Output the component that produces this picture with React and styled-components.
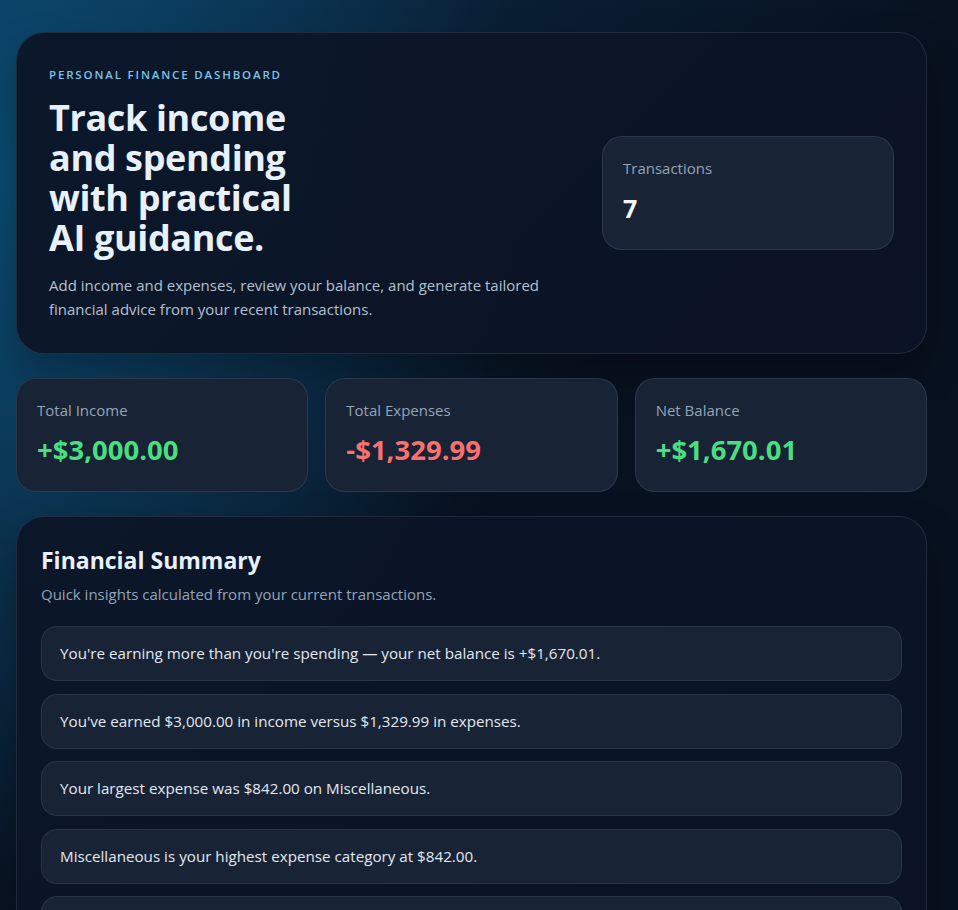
import React from "react";
import styled, { createGlobalStyle } from "styled-components";

const Global = createGlobalStyle`
  html, body { margin: 0; padding: 0; }
  body {
    font-family: "Segoe UI", "Open Sans", "Noto Sans", sans-serif;
    color: #e2e8f0;
    background-color: #08111f;
    background-image:
      radial-gradient(ellipse 520px 700px at 0px 180px, rgba(12, 86, 128, 0.75), rgba(12, 86, 128, 0) 100%),
      linear-gradient(135deg, #0b2d4a 0px, #08111f 700px);
    background-repeat: no-repeat;
  }
  * { box-sizing: border-box; }
`;

const Page = styled.main`
  padding: 32px 31px 48px 16px;
  display: flex;
  flex-direction: column;
  gap: 24px;
`;

const Panel = styled.section`
  border-radius: 28px;
  border: 1px solid rgba(148, 163, 184, 0.16);
  background: linear-gradient(135deg, rgba(12, 22, 40, 0.96), rgba(11, 20, 36, 0.96));
  box-shadow: 0 20px 40px rgba(0, 0, 0, 0.25);
  padding: ${(p) => p.$pad || "24px"};
`;

const Hero = styled(Panel)`
  display: flex;
  align-items: center;
  justify-content: space-between;
  gap: 32px;
`;

const HeroText = styled.div`
  display: flex;
  flex-direction: column;
`;

const Eyebrow = styled.p`
  margin: 2px 0 0;
  font-size: 11.5px;
  letter-spacing: 0.16em;
  text-transform: uppercase;
  color: #7cc4ea;
  font-weight: 600;
`;

const Title = styled.h1`
  margin: 16px 0 0;
  font-size: 36px;
  line-height: 40px;
  font-weight: 700;
  color: #e8f0fa;
  max-width: 270px;
  letter-spacing: -0.01em;
`;

const Lead = styled.p`
  margin: 15px 0 0;
  font-size: 15px;
  line-height: 24px;
  color: #b4c0d0;
  max-width: 520px;
`;

const StatCard = styled.div`
  border-radius: 20px;
  border: 1px solid rgba(148, 163, 184, 0.16);
  background: #182335;
  padding: 21px 20px;
  height: 114px;
  width: ${(p) => p.$width || "auto"};
  flex-shrink: 0;
  display: flex;
  flex-direction: column;
  gap: 14px;
`;

const StatLabel = styled.span`
  font-size: 15px;
  color: #94a3b8;
`;

const StatValue = styled.span`
  font-size: ${(p) => (p.$small ? "25px" : "27.5px")};
  font-weight: 700;
  line-height: 32px;
  color: ${(p) => (p.$tone === "pos" ? "#4ade80" : p.$tone === "neg" ? "#f87171" : "#f1f5f9")};
`;

const StatsRow = styled.div`
  display: grid;
  grid-template-columns: repeat(3, 1fr);
  gap: 17px;
`;

const SectionTitle = styled.h2`
  margin: 3px 0 0;
  font-size: 23px;
  font-weight: 700;
  color: #e8f0fa;
`;

const SectionSub = styled.p`
  margin: 8px 0 0;
  font-size: 15px;
  color: #94a3b8;
`;

const List = styled.ul`
  list-style: none;
  margin: 22px 0 0;
  padding: 0;
  display: flex;
  flex-direction: column;
  gap: 12.5px;
`;

const Insight = styled.li`
  border-radius: 16px;
  border: 1px solid rgba(148, 163, 184, 0.14);
  background: #182335;
  padding: 16px 18px;
  font-size: 15.2px;
  line-height: 21px;
  color: #e2e8f0;
`;

const Form = styled.form`
  margin-top: 22px;
  display: grid;
  grid-template-columns: 1fr 1fr;
  gap: 16px;
`;

const Field = styled.label`
  display: flex;
  flex-direction: column;
  gap: 8px;
  font-size: 14px;
  color: #94a3b8;
`;

const Input = styled.div`
  height: 46px;
  border-radius: 14px;
  border: 1px solid rgba(148, 163, 184, 0.18);
  background: #182335;
  padding: 0 14px;
  display: flex;
  align-items: center;
  color: #e2e8f0;
  font-size: 15px;
`;

const Button = styled.button`
  grid-column: 1 / -1;
  height: 48px;
  border: none;
  border-radius: 14px;
  background: linear-gradient(135deg, #38bdf8, #0ea5e9);
  color: #04121f;
  font: 700 15px "Segoe UI", "Open Sans", sans-serif;
`;

const TxRow = styled.li`
  border-radius: 16px;
  border: 1px solid rgba(148, 163, 184, 0.14);
  background: #182335;
  padding: 16px 18px;
  display: flex;
  align-items: center;
  justify-content: space-between;
`;

const TxInfo = styled.div`
  display: flex;
  flex-direction: column;
  gap: 4px;
`;

const TxName = styled.span`
  font-size: 15px;
  font-weight: 600;
  color: #e2e8f0;
`;

const TxMeta = styled.span`
  font-size: 13px;
  color: #94a3b8;
`;

const TxAmount = styled.span`
  font-size: 16px;
  font-weight: 700;
  color: ${(p) => (p.$tone === "pos" ? "#4ade80" : "#f87171")};
`;

const Advice = styled.p`
  margin: 0;
  font-size: 15px;
  line-height: 24px;
  color: #cbd5e1;
`;

const insights = [
  "You're earning more than you're spending — your net balance is +$1,670.01.",
  "You've earned $3,000.00 in income versus $1,329.99 in expenses.",
  "Your largest expense was $842.00 on Miscellaneous.",
  "Miscellaneous is your highest expense category at $842.00.",
  "You're saving about 55.7% of your income.",
  "Food accounts for $212.49 of your spending this period.",
  "Transport costs total $95.50 across your recent transactions.",
  "You have recorded 7 transactions so far.",
];

const txs = [
  { name: "Salary", meta: "Income · Jun 1", amount: "+$3,000.00", tone: "pos" },
  { name: "Rent share", meta: "Miscellaneous · Jun 2", amount: "-$842.00", tone: "neg" },
  { name: "Groceries", meta: "Food · Jun 4", amount: "-$142.49", tone: "neg" },
  { name: "Electricity bill", meta: "Utilities · Jun 6", amount: "-$110.00", tone: "neg" },
  { name: "Train pass", meta: "Transport · Jun 7", amount: "-$95.50", tone: "neg" },
  { name: "Streaming", meta: "Entertainment · Jun 9", amount: "-$70.00", tone: "neg" },
  { name: "Restaurant", meta: "Food · Jun 11", amount: "-$70.00", tone: "neg" },
];

const advice = [
  "Your balance is healthy. Consider moving part of your surplus into an emergency fund that covers three to six months of expenses.",
  "Miscellaneous spending is your largest category. Break it into clearer categories so you can see where that money goes.",
  "Set a monthly food budget and track it weekly to keep grocery and restaurant costs predictable.",
  "Automate a fixed transfer to savings on payday so saving happens before spending.",
  "Review recurring subscriptions each quarter and cancel those you no longer use.",
  "If you have high-interest debt, direct extra surplus there first before investing.",
];

export default function App() {
  return (
    <>
      <Global />
      <Page>
        <Hero $pad="32px">
          <HeroText>
            <Eyebrow>Personal Finance Dashboard</Eyebrow>
            <Title>Track income and spending with practical AI guidance.</Title>
            <Lead>
              Add income and expenses, review your balance, and generate tailored financial advice from your recent
              transactions.
            </Lead>
          </HeroText>
          <StatCard $width="292px">
            <StatLabel>Transactions</StatLabel>
            <StatValue $small>7</StatValue>
          </StatCard>
        </Hero>

        <StatsRow>
          <StatCard>
            <StatLabel>Total Income</StatLabel>
            <StatValue $tone="pos">+$3,000.00</StatValue>
          </StatCard>
          <StatCard>
            <StatLabel>Total Expenses</StatLabel>
            <StatValue $tone="neg">-$1,329.99</StatValue>
          </StatCard>
          <StatCard>
            <StatLabel>Net Balance</StatLabel>
            <StatValue $tone="pos">+$1,670.01</StatValue>
          </StatCard>
        </StatsRow>

        <Panel>
          <SectionTitle>Financial Summary</SectionTitle>
          <SectionSub>Quick insights calculated from your current transactions.</SectionSub>
          <List>
            {insights.map((t) => (
              <Insight key={t}>{t}</Insight>
            ))}
          </List>
        </Panel>

        <Panel>
          <SectionTitle>Add Transaction</SectionTitle>
          <SectionSub>Record a new income or expense entry.</SectionSub>
          <Form onSubmit={(e) => e.preventDefault()}>
            <Field>
              Description
              <Input>e.g. Groceries</Input>
            </Field>
            <Field>
              Amount
              <Input>0.00</Input>
            </Field>
            <Field>
              Type
              <Input>Expense</Input>
            </Field>
            <Field>
              Category
              <Input>Food</Input>
            </Field>
            <Field>
              Date
              <Input>2024-06-12</Input>
            </Field>
            <Field>
              Note
              <Input>Optional</Input>
            </Field>
            <Button type="submit">Add transaction</Button>
          </Form>
        </Panel>

        <Panel>
          <SectionTitle>Recent Transactions</SectionTitle>
          <SectionSub>Your latest income and expense entries.</SectionSub>
          <List>
            {txs.map((t) => (
              <TxRow key={t.name}>
                <TxInfo>
                  <TxName>{t.name}</TxName>
                  <TxMeta>{t.meta}</TxMeta>
                </TxInfo>
                <TxAmount $tone={t.tone}>{t.amount}</TxAmount>
              </TxRow>
            ))}
          </List>
        </Panel>

        <Panel>
          <SectionTitle>AI Financial Advice</SectionTitle>
          <SectionSub>Tailored suggestions generated from your recent transactions.</SectionSub>
          <List>
            {advice.map((t) => (
              <Insight key={t}>
                <Advice>{t}</Advice>
              </Insight>
            ))}
          </List>
        </Panel>
      </Page>
    </>
  );
}
